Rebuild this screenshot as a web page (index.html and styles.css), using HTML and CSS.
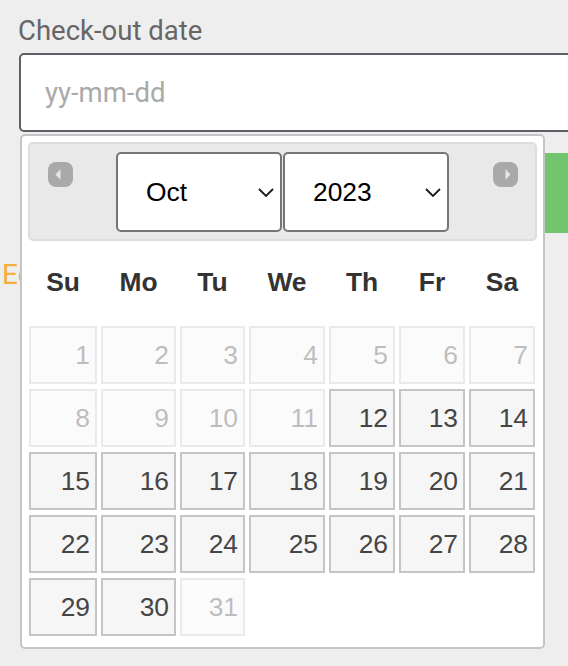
FILE: index.html
```html
<!DOCTYPE html>
<html lang="en">
<head>
    <meta charset="UTF-8">
    <meta name="viewport" content="width=device-width, initial-scale=1.0">
    <title>Check-out date</title>
    <link rel="stylesheet" href="styles.css">
</head>
<body>

<div class="page">
    <label class="field-label" for="checkout">Check-out date</label>
    <input class="date-input" id="checkout" type="text" placeholder="yy-mm-dd">
    <button class="search-btn" type="button">Search</button>
    <a class="edit-link" href="#">Edit</a>
</div>

<!-- datepicker popup, sits over the form -->
<div class="datepicker">
    <div class="dp-header">
        <span class="dp-nav dp-prev" title="Prev">
            <svg width="25" height="25" viewBox="0 0 25 25"><rect x="0" y="0" width="25" height="25" rx="8" fill="#a9a9a9"/><polygon points="7.5,12.5 12.5,7 12.5,18" fill="#e6e6e6"/></svg>
        </span>
        <div class="select-wrap">
            <select class="dp-select">
                <option>Oct</option>
            </select>
            <svg class="chevron" width="16" height="9" viewBox="0 0 16 9"><polyline points="1,1 8,8 15,1" fill="none" stroke="#1a1a1a" stroke-width="1.8"/></svg>
        </div>
        <div class="select-wrap">
            <select class="dp-select">
                <option>2023</option>
            </select>
            <svg class="chevron" width="16" height="9" viewBox="0 0 16 9"><polyline points="1,1 8,8 15,1" fill="none" stroke="#1a1a1a" stroke-width="1.8"/></svg>
        </div>
        <span class="dp-nav dp-next" title="Next">
            <svg width="25" height="25" viewBox="0 0 25 25"><rect x="0" y="0" width="25" height="25" rx="8" fill="#a9a9a9"/><polygon points="17.5,12.5 12.5,7 12.5,18" fill="#e6e6e6"/></svg>
        </span>
    </div>

    <div class="dp-weekdays">
        <span>Su</span><span>Mo</span><span>Tu</span><span>We</span><span>Th</span><span>Fr</span><span>Sa</span>
    </div>

    <div class="dp-days">
        <span class="day off">1</span><span class="day off">2</span><span class="day off">3</span><span class="day off">4</span><span class="day off">5</span><span class="day off">6</span><span class="day off">7</span>
        <span class="day off">8</span><span class="day off">9</span><span class="day off">10</span><span class="day off">11</span><span class="day">12</span><span class="day">13</span><span class="day">14</span>
        <span class="day">15</span><span class="day">16</span><span class="day">17</span><span class="day">18</span><span class="day">19</span><span class="day">20</span><span class="day">21</span>
        <span class="day">22</span><span class="day">23</span><span class="day">24</span><span class="day">25</span><span class="day">26</span><span class="day">27</span><span class="day">28</span>
        <span class="day">29</span><span class="day">30</span><span class="day off">31</span>
    </div>
</div>

</body>
</html>
```

FILE: styles.css
```css
body {
    margin: 0;
    background-color: #eeeeee;
    font-family: Roboto, "Liberation Sans", sans-serif;
    overflow: hidden;
    height: 666px;
    position: relative;
}

.page {
    display: flex;
    flex-direction: column;
    align-items: flex-start;
    padding-left: 19px;
}

.field-label {
    margin-top: 15px;
    margin-left: -1px;
    font-size: 27.5px;
    line-height: 32px;
    color: #666666;
}

.date-input {
    margin-top: 6px;
    width: 620px;
    height: 79px;
    box-sizing: border-box;
    border: 2px solid #5c6067;
    border-radius: 5px;
    background: white;
    padding: 0 24px;
    font-family: Roboto, sans-serif;
    font-size: 27.5px;
    outline: none;
}
.date-input::placeholder {
    color: #aaaaaa;
}

.search-btn {
    margin-top: 21px;
    margin-left: 6px;
    width: 620px;
    height: 80px;
    border: none;
    border-radius: 5px;
    background-color: #72c46e;
    color: white;
    font-size: 27px;
}

.edit-link {
    margin-top: 26px;
    margin-left: -17px;
    font-size: 28px;
    line-height: 32px;
    color: #f4af3d;
    text-decoration: none;
}

/* datepicker */
.datepicker {
    position: absolute;
    left: 20px;
    top: 134px;
    width: 525px;
    box-sizing: border-box;
    border: 2px solid #c5c5c5;
    border-radius: 5px;
    background: white;
    padding: 6px 6px 11px;
    font-family: "Liberation Sans", Arial, sans-serif;
}

.dp-header {
    position: relative;
    height: 99px;
    box-sizing: border-box;
    border: 2px solid #dddddd;
    border-radius: 5px;
    background-color: #e9e9e9;
    display: flex;
    justify-content: center;
    align-items: center;
    gap: 1px;
}

.dp-nav {
    position: absolute;
    top: 18px;
    width: 25px;
    height: 25px;
    display: block;
}
.dp-nav svg {
    display: block;
}
.dp-prev { left: 18px; }
.dp-next { right: 17px; }

.select-wrap {
    position: relative;
}

.dp-select {
    appearance: none;
    -webkit-appearance: none;
    width: 166px;
    height: 80px;
    box-sizing: border-box;
    border: 2px solid #767676;
    border-radius: 5px;
    background: white;
    padding: 0 0 0 28px;
    font-family: "Liberation Sans", Arial, sans-serif;
    font-size: 26.4px;
    color: #000;
    display: block;
}

.chevron {
    position: absolute;
    right: 8px;
    top: 36px;
    display: block;
}

.dp-weekdays,
.dp-days {
    display: grid;
    grid-template-columns: 68px 75px 65px 76px 66px 66px 66px;
    column-gap: 4px;
    margin: 0 1px;
}

.dp-weekdays {
    margin-top: 2px;
    height: 79px;
    align-items: center;
    text-align: center;
    font-weight: bold;
    font-size: 26.4px;
    color: #333333;
}

.dp-days {
    margin-top: 4px;
    row-gap: 5px;
}

.day {
    height: 58px;
    box-sizing: border-box;
    border: 2px solid #c5c5c5;
    background-color: #f6f6f6;
    color: #454545;
    font-size: 26.4px;
    line-height: 54px;
    text-align: right;
    padding-right: 5px;
}

.day.off {
    opacity: 0.35;
}
```
